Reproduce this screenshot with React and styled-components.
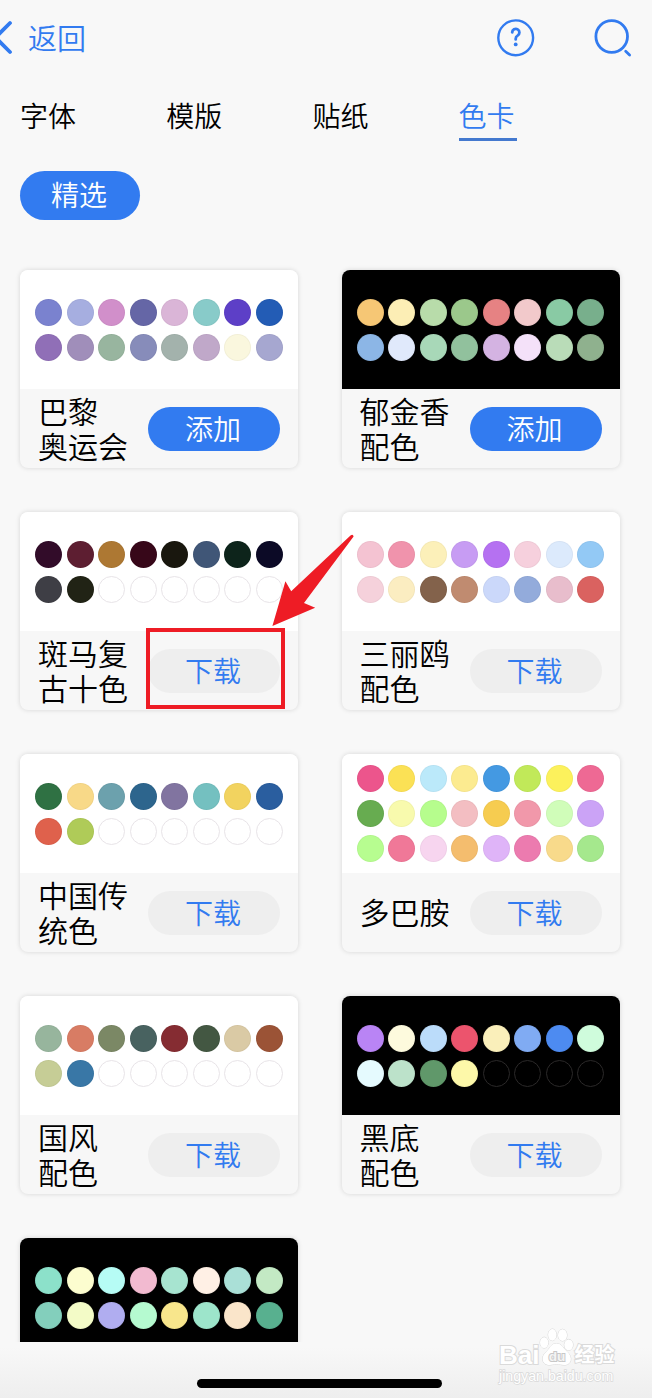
import React from "react";
import styled, { createGlobalStyle, css } from "styled-components";

const GlobalStyle = createGlobalStyle`
  body {
    margin: 0;
    background: #f8f8f8;
    font-family: "Noto Sans CJK SC", sans-serif;
    font-weight: 350;
  }

  * {
    box-sizing: border-box;
  }
`

const blue = "#327bf0";

const Page = styled.div`
  position: relative;
  display: flex;
  flex-direction: column;
  width: 652px;
  height: 1398px;
  overflow: hidden;
  background: #f8f8f8;
  color: #000;
`

const Header = styled.header`
  display: flex;
  align-items: center;
  flex: none;
  height: 75px;
  padding-right: 18px;
  color: ${blue};
`

const Back = styled.div`
  display: flex;
  align-items: center;
  margin-right: auto;
  padding-bottom: 2px;
  font-size: 29px;
  line-height: 40px;
`

const Icon = styled.svg`
  display: block;
  flex: none;
  fill: none;
  stroke: currentColor;
  stroke-linecap: round;
`

const Actions = styled.div`
  display: flex;
  gap: 56px;
`

const Tabs = styled.nav`
  display: flex;
  flex: none;
  gap: 88.2px;
  margin-top: 24px;
  padding-left: 20px;
`

const Tab = styled.div`
  width: 58px;
  height: 42px;
  font-size: 28px;
  line-height: 32px;

  ${props => props.$active && css`
    color: ${blue};
    border-bottom: 3px solid #4479cf;
  `}
`

const Filter = styled.div`
  flex: none;
  width: 120px;
  height: 49px;
  margin: 30px 0 0 20px;
  padding-right: 2px;
  border-radius: 25px;
  background: ${blue};
  color: white;
  font-size: 28px;
  line-height: 47px;
  text-align: center;
`

const List = styled.main`
  display: grid;
  flex: none;
  grid-template-columns: 278px 278px;
  grid-auto-rows: 198px;
  gap: 44px 43.6px;
  height: 1082px;
  margin-top: 40px;
  padding: 10px 20px 0;
  overflow: hidden;
`

const Card = styled.section`
  position: relative;
  display: flex;
  flex-direction: column;
  border-radius: 8px;
  background: #f7f7f7;
  box-shadow: 0 0 5px rgba(0, 0, 0, 0.14);
`

const Swatches = styled.div`
  display: grid;
  grid-template-columns: repeat(8, 27px);
  align-content: center;
  gap: 8px 4.5px;
  flex: none;
  height: 119px;
  padding-left: 15px;
  border-radius: 8px 8px 0 0;
  background: ${props => props.$dark ? "#000" : "#fff"};
`

const Swatch = styled.i`
  height: 27px;
  border: 1px solid rgba(0, 0, 0, 0.03);
  border-radius: 50%;

  ${props => props.$empty && css`
    border-color: ${props.$dark ? "#2b2929" : "#e8e4e8"};
  `}
`

const Info = styled.div`
  display: flex;
  align-items: center;
  justify-content: space-between;
  flex: 1;
  padding: 0 18px;
`

const Name = styled.div`
  padding-bottom: 2px;
  font-size: 30px;
  line-height: 35px;
  white-space: pre;
`

const Button = styled.div`
  width: 132px;
  height: 44px;
  padding-right: 2px;
  border-radius: 22px;
  background: ${props => props.$added ? blue : "#eee"};
  color: ${props => props.$added ? "#fff" : blue};
  font-size: 28px;
  line-height: 42px;
  text-align: center;
`

const Highlight = styled.div`
  position: absolute;
  z-index: 1;
  left: 126px;
  top: 116px;
  width: 139px;
  height: 81px;
  border: 4px solid #ee1c25;
`

const Arrow = styled.svg`
  position: absolute;
  z-index: 2;
  left: 252px;
  top: 21px;
  fill: #ee1c25;
`

const Bottom = styled.footer`
  flex: 1;
  padding: 37px 0 0 197px;
  background: linear-gradient(#f8f8f8 10%, #eee);
`

const HomeBar = styled.div`
  width: 245px;
  height: 9px;
  border-radius: 5px;
  background: #000;
`

const Watermark = styled.div`
  position: absolute;
  left: 499px;
  top: 1326px;
  width: 120px;
  color: #fff;
  font-family: "Liberation Sans", "Noto Sans CJK SC", sans-serif;
  -webkit-text-stroke: 2px #dadada;
  paint-order: stroke fill;
`

const Brand = styled.div`
  display: flex;
  align-items: flex-end;
  height: 41px;
  font-size: 26px;
  font-weight: bold;
  line-height: 24px;

  span:last-child {
    font-size: 20px;
  }
`

const Paw = styled.svg`
  flex: none;
  fill: #fff;
  stroke: #d6d6d6;

  text {
    fill: #f4f4f4;
    font-size: 14px;
    -webkit-text-stroke: 0;
    stroke: #c8c8c8;
    stroke-width: 2px;
  }
`

const Site = styled.div`
  margin-top: 2px;
  font-family: "Liberation Sans", sans-serif;
  font-size: 14.2px;
  font-weight: 400;
  line-height: 14px;
  -webkit-text-stroke-width: 1.5px;
`

const palettes = [
  {
    name: "巴黎\n奥运会", added: true, total: 16,
    colors: "7a82cf a6aee0 d18fca 6566a6 dab5d7 88cbc9 5d3fc7 235cb5 906fb7 a08eba 98b59f 878cba a3b2ac c0a8c9 faf7de a6a7d0",
  },
  {
    name: "郁金香\n配色", added: true, dark: true, total: 16,
    colors: "f6c775 fceeb5 b8dcaa 9bc88b e68283 f2c9cb 89caa4 78af8c 8cb6e6 e0e9fb a8d8b8 91c19d d4b3e2 f4e1f9 b9dcb8 8fb18e",
  },
  {
    name: "斑马复\n古十色", marked: true, total: 16,
    colors: "320c29 5d1e31 ad7833 370719 19170e 405677 0d241b 0c0a26 3e3e45 212315",
  },
  {
    name: "三丽鸥\n配色", total: 16,
    colors: "f4c3d2 f093ac fcf0b9 c79cf3 b571f1 f6d0dd dceafc 93c9f5 f5d1db fbedc1 83624b c08b70 cbd8fa 93abdb e8bdcc da6260",
  },
  {
    name: "中国传\n统色", total: 16,
    colors: "2f7143 f8d988 6ca1ad 2d658d 8174a0 74c0c0 f2d35f 2a5e9f df614c afcb58",
  },
  {
    name: "多巴胺", total: 24,
    colors: "ec558c fbe155 bbe9fa fceb90 4499e2 c1e959 fcf15c ee6994 67ac50 f8faad b6fd8d f3bec2 f6cc50 f198aa d0fdb9 cba3f6 b7fd90 f07898 f7d5ef f4bd6e dfb4f8 ec7baf f8da8b a5e88d",
  },
  {
    name: "国风\n配色", total: 16,
    colors: "97b59d d87c64 7b8865 486260 852c32 435742 dacaa5 9b5336 c6cd96 3977a6",
  },
  {
    name: "黑底\n配色", dark: true, total: 16,
    colors: "b984f5 fdfadd bbdcfa ec546d faefba 80abf3 4d8bf1 cffcdc e5fafe bce2ca 60986a fdf8a9",
  },
  {
    name: "", dark: true, total: 16,
    colors: "8ce1ca fcfdcf b6fcf5 f2bad0 a7e4d0 fff0e5 aae0d7 c3e9c4 83cfbc f3fbc7 b0adf0 b5fad0 f8e68c 9de5cb fae5ca 58b08f",
  },
];

function PaletteCard({ palette }) {
  const { name, colors, total, dark, added, marked } = palette;
  const filled = colors.split(" ");

  return (
    <Card>
      <Swatches $dark={dark}>
        {Array.from({ length: total }, (_, i) => (
          <Swatch
            key={i}
            $dark={dark}
            $empty={!filled[i]}
            style={{ background: filled[i] ? `#${filled[i]}` : "transparent" }}
          />
        ))}
      </Swatches>
      <Info>
        <Name>{name}</Name>
        {name && <Button $added={added}>{added ? "添加" : "下载"}</Button>}
      </Info>
      {marked && (
        <>
          <Highlight />
          <Arrow width="84" height="94" viewBox="0 0 84 94">
            <path d="M.4 93 13.4 48.2 19.2 58.2 78.5 2.500Q81 .5 81.600 3.5L32 70 43.2 74.7Z" />
          </Arrow>
        </>
      )}
    </Card>
  );
}

function App() {
  return (
    <Page>
      <GlobalStyle />
      <Header>
        <Back>
          <Icon width="28" height="36" viewBox="0 0 28 36" strokeWidth="3.8">
            <path d="M10 4-4.500 18.5 10 33" />
          </Icon>
          返回
        </Back>
        <Actions>
          <Icon width="40" height="40" viewBox="0 0 40 40" strokeWidth="2.4">
            <circle cx="19.7" cy="19.8" r="17.4" />
            <path d="M16.2 14.4a3.600 3.600 0 1 1 5.400 3.200q-1.900 1.100-1.900 3.200v.6" strokeWidth="2.8" />
            <circle cx="19.7" cy="26.4" r="1.9" fill="currentColor" stroke="none" />
          </Icon>
          <Icon width="42" height="40" viewBox="0 0 42 40" strokeWidth="2.8">
            <circle cx="19.7" cy="18.5" r="15.8" />
            <path d="M33.7 33.3 37.600 37" strokeWidth="2.8" />
          </Icon>
        </Actions>
      </Header>
      <Tabs>
        <Tab>字体</Tab>
        <Tab>模版</Tab>
        <Tab>贴纸</Tab>
        <Tab $active>色卡</Tab>
      </Tabs>
      <Filter>精选</Filter>
      <List>
        {palettes.map((palette, i) => <PaletteCard key={i} palette={palette} />)}
      </List>
      <Bottom>
        <HomeBar />
      </Bottom>
      <Watermark>
        <Brand>
          <span>Bai</span>
          <Paw width="35" height="41" viewBox="0 0 36 41">
            <ellipse cx="5.3" cy="16.5" rx="4.2" ry="5.6" />
            <ellipse cx="13.7" cy="8.5" rx="4.3" ry="6" />
            <ellipse cx="24.2" cy="8.8" rx="4.6" ry="6" />
            <ellipse cx="30.5" cy="18.8" rx="4.5" ry="5.6" />
            <path d="M18 17.5c-6 0-6.500 5-10.500 8.500-6 5-4.500 13 2 13.500 4 .3 5-1 8.500-1s5 1.300 9 1c6.500-.5 8-8 2-13.500-4-3.500-5.500-8.500-11-8.500Z" />
            <text x="10" y="35">du</text>
          </Paw>
          <span>经验</span>
        </Brand>
        <Site>jingyan.baidu.com</Site>
      </Watermark>
    </Page>
  );
}

export default App;
